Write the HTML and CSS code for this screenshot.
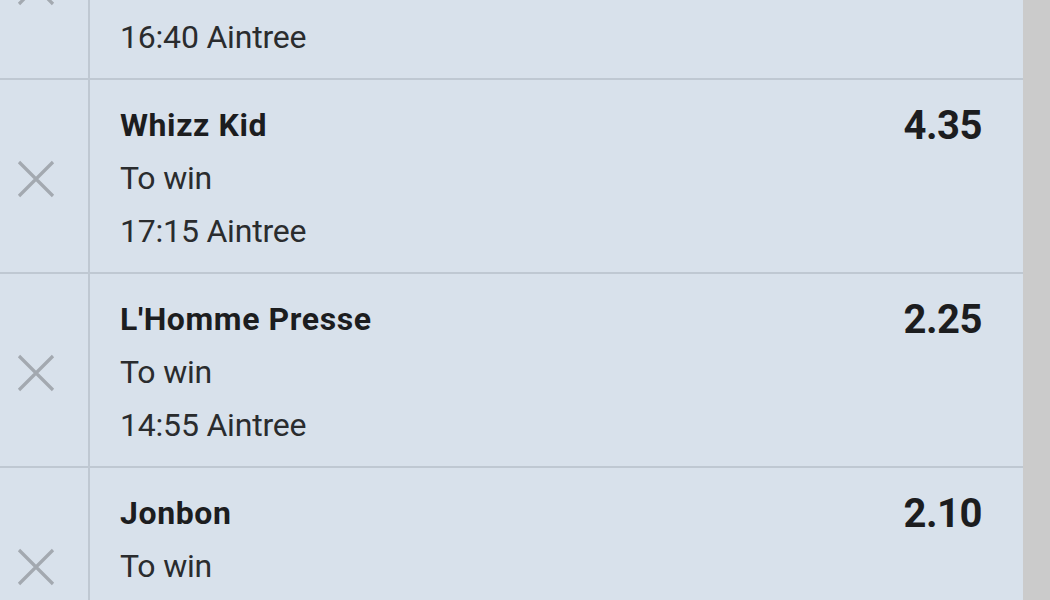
FILE: index.html
```html
<!DOCTYPE html>
<html>
<head>
<meta charset="utf-8">
<link rel="stylesheet" href="styles.css">
</head>
<body>
<div class="page">
  <div class="slip">
    <div class="bet bet-partial">
      <div class="remove"><svg viewBox="0 0 38 38" width="38" height="38"><path d="M2 2 L36 36 M36 2 L2 36" /></svg></div>
      <div class="info">
        <div class="text">
          <div class="market">16:40 Aintree</div>
        </div>
      </div>
    </div>
    <div class="bet">
      <div class="remove"><svg viewBox="0 0 38 38" width="38" height="38"><path d="M2 2 L36 36 M36 2 L2 36" /></svg></div>
      <div class="info">
        <div class="text">
          <div class="name">Whizz Kid</div>
          <div class="market">To win</div>
          <div class="market">17:15 Aintree</div>
        </div>
        <div class="odds">4.35</div>
      </div>
    </div>
    <div class="bet">
      <div class="remove"><svg viewBox="0 0 38 38" width="38" height="38"><path d="M2 2 L36 36 M36 2 L2 36" /></svg></div>
      <div class="info">
        <div class="text">
          <div class="name">L'Homme Presse</div>
          <div class="market">To win</div>
          <div class="market">14:55 Aintree</div>
        </div>
        <div class="odds">2.25</div>
      </div>
    </div>
    <div class="bet">
      <div class="remove"><svg viewBox="0 0 38 38" width="38" height="38"><path d="M2 2 L36 36 M36 2 L2 36" /></svg></div>
      <div class="info">
        <div class="text">
          <div class="name">Jonbon</div>
          <div class="market">To win</div>
        </div>
        <div class="odds">2.10</div>
      </div>
    </div>
  </div>
  <div class="scrollbar"></div>
</div>
</body>
</html>
```
FILE: styles.css
```css
html, body {
  margin: 0;
  padding: 0;
  height: 100%;
  overflow: hidden;
}
body {
  background: #d8e1eb;
  font-family: Roboto, "Liberation Sans", sans-serif;
}
.page {
  display: flex;
  height: 600px;
  overflow: hidden;
}
.slip {
  flex: 1;
  display: flex;
  flex-direction: column;
  background: #d8e1eb;
  overflow: hidden;
}
.bet {
  display: flex;
  height: 192px;
  flex-shrink: 0;
  border-bottom: 2px solid #bfc8d2;
}
.remove {
  width: 90px;
  flex-shrink: 0;
  border-right: 2px solid #bfc8d2;
  display: flex;
  align-items: center;
  padding-left: 17px;
  padding-top: 6px;
  box-sizing: border-box;
}
.remove svg {
  display: block;
  stroke: #a3a9b0;
  stroke-width: 3.2;
  fill: none;
}
.info {
  flex: 1;
  display: flex;
  justify-content: space-between;
  align-items: flex-start;
  padding: 19px 41px 0 30px;
}
.bet-partial {
  height: 78px;
  overflow: hidden;
}
.bet-partial .remove {
  align-items: flex-start;
  padding-top: 0;
}
.bet-partial .remove svg {
  margin-top: -32px;
}
.bet-partial .info {
  padding-top: 11px;
}
.text {
  display: flex;
  flex-direction: column;
}
.name {
  font-size: 32px;
  line-height: 53px;
  font-weight: 700;
  color: #1c1d1f;
  letter-spacing: 0.6px;
}
.market {
  font-size: 32px;
  line-height: 53px;
  font-weight: 400;
  color: #2a2c2e;
  letter-spacing: -0.2px;
}
.odds {
  font-size: 40px;
  line-height: 53px;
  font-weight: 700;
  color: #1c1d1f;
  letter-spacing: -0.5px;
}
.scrollbar {
  width: 27px;
  flex-shrink: 0;
  background: #cbcbcb;
}
```
